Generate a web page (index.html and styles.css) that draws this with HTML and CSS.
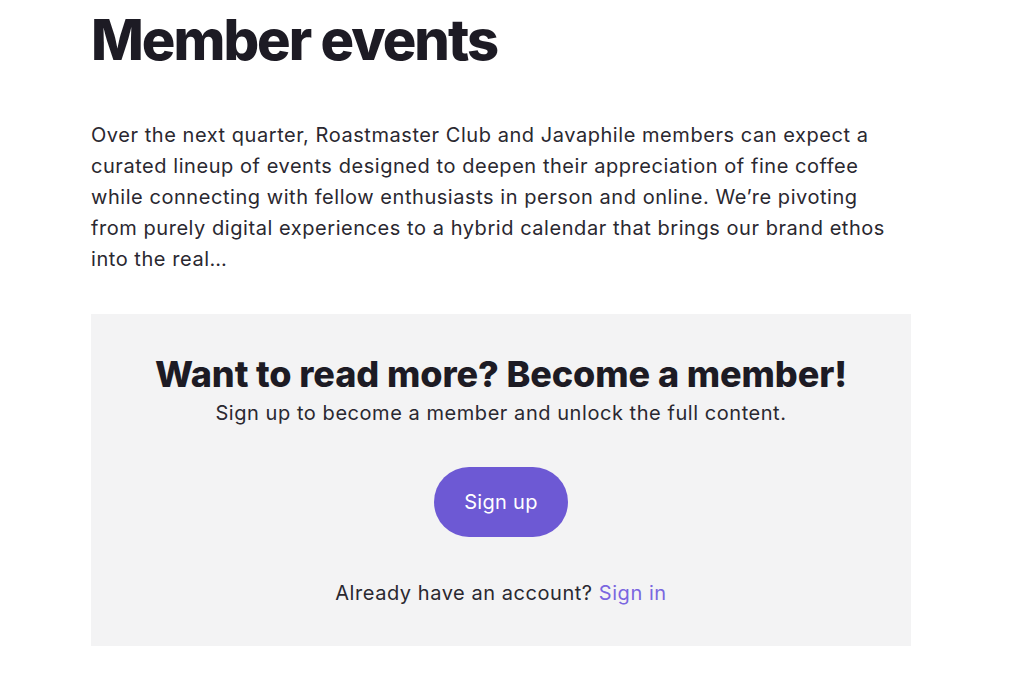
FILE: index.html
```html
<!DOCTYPE html>
<html lang="en">
<head>
    <meta charset="UTF-8">
    <meta name="viewport" content="width=device-width, initial-scale=1.0">
    <title>Member events</title>
    <link rel="stylesheet" href="styles.css">
</head>
<body>

    <div id="post">
        <h1 class="post-title">Member events</h1>

        <p class="post-excerpt">
            Over the next quarter, Roastmaster Club and Javaphile members can expect a
            curated lineup of events designed to deepen their appreciation of fine coffee
            while connecting with fellow enthusiasts in person and online. We’re pivoting
            from purely digital experiences to a hybrid calendar that brings our brand ethos
            into the real…
        </p>

        <div class="paywall">
            <h2>Want to read more? Become a member!</h2>
            <p class="paywall-sub">Sign up to become a member and unlock the full content.</p>
            <a class="signup-btn" href="#">Sign up</a>
            <p class="signin">Already have an account? <a href="#">Sign in</a></p>
        </div>
    </div>

</body>
</html>
```

FILE: styles.css
```css
body {
    font-family: Inter, "Noto Sans", sans-serif;
    margin: 0;
    padding: 0;
    background: #ffffff;
    color: #1f1d25;
}

#post {
    width: 820px;
    margin-left: 91px;
}

.post-title {
    font-size: 56px;
    font-weight: 800;
    letter-spacing: -2px;
    line-height: 66px;
    margin: 7px 0 0 0;
    color: #1d1b24;
}

.post-excerpt {
    font-size: 20px;
    line-height: 31px;
    letter-spacing: 0.55px;
    color: #2a2830;
    margin: 47px 0 0 0;
    width: 815px;
}

.paywall {
    background-color: #f3f3f4;
    margin-top: 39px;
    padding: 38px 20px 39px;
    text-align: center;
}

.paywall h2 {
    font-size: 36px;
    font-weight: 800;
    letter-spacing: -0.1px;
    line-height: 44px;
    margin: 0;
    color: #1d1b24;
}

.paywall-sub {
    font-size: 20px;
    line-height: 28px;
    letter-spacing: 0.55px;
    margin: 3px 0 0 0;
    color: #2a2830;
}

.signup-btn {
    display: inline-block;
    margin-top: 40px;
    padding: 0 30px;
    height: 70px;
    line-height: 70px;
    border-radius: 35px;
    background-color: #6d59d4;
    color: white;
    font-size: 20px;
    letter-spacing: 0.3px;
    text-decoration: none;
}

.signin {
    font-size: 20px;
    line-height: 28px;
    letter-spacing: 0.55px;
    margin: 42px 0 0 0;
    color: #2a2830;
}

.signin a {
    color: #7a66e0;
    text-decoration: none;
}
```
